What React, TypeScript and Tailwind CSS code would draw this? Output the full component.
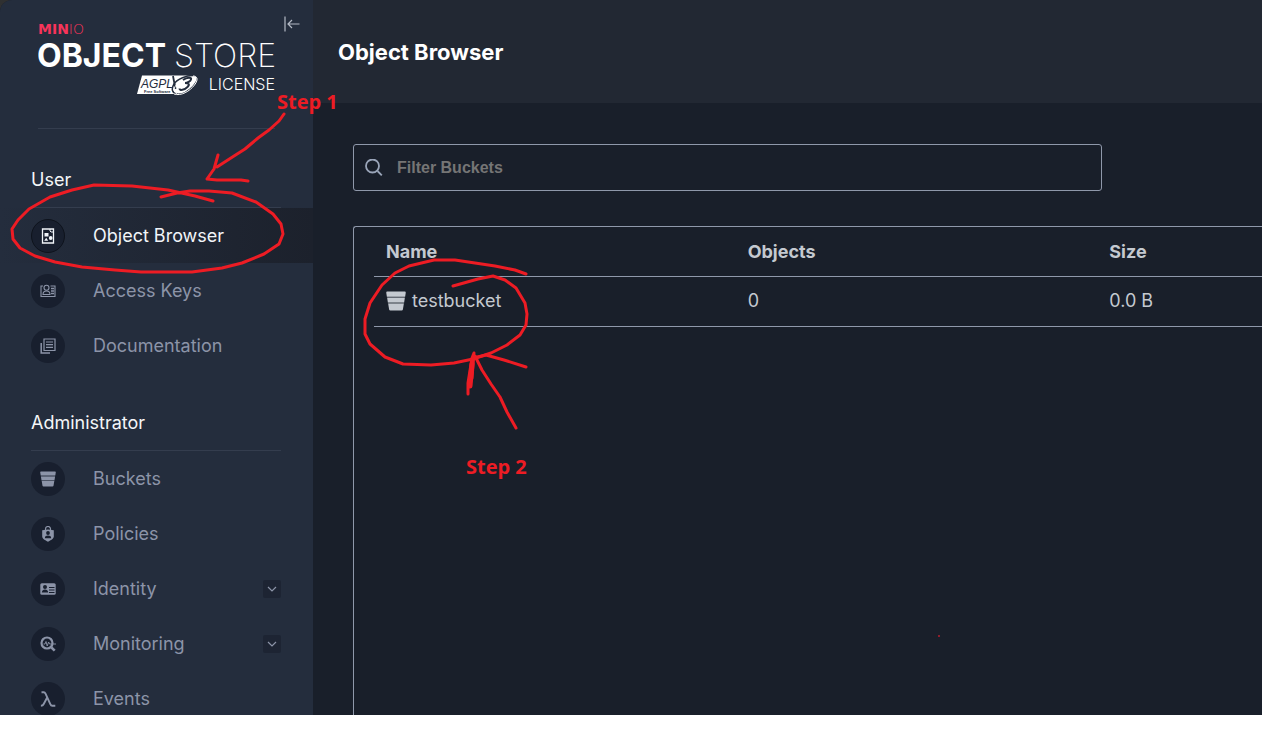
import type { ReactNode } from "react";

type NavItem = { label: string; icon: ReactNode; active?: boolean; expandable?: boolean };

function BucketIcon({ className }: { className: string }) {
  return (
    <svg viewBox="0 0 16 16" className={className} fill="currentColor" aria-hidden="true">
      <path d="M1 .4h14a.8.8 0 0 1 .8.9L15.3 4.600H.7L.2 1.300A.8.8 0 0 1 1 .4Z" />
      <path d="M.9 5.400h14.200l-.6 3.800H1.500Z" />
      <path d="M1.700 10h12.600l-.8 4.800a1 1 0 0 1-1 .8h-9a1 1 0 0 1-1-.8Z" />
      <path d="M1 4.600h14v.8H1ZM1.500 9.200h13v.8h-13Z" opacity=".35" />
    </svg>
  );
}

function ObjectBrowserIcon() {
  return (
    <svg viewBox="0 0 16 16" className="size-4" fill="none" stroke="currentColor" aria-hidden="true">
      <path d="M2.500 1h11v14h-11Z" strokeWidth="1.300" />
      <path d="M10 1v2l1 1h2.500" />
      <path d="M4.500 5h4v3.500h-4ZM4.200 12.800 6.200 9.800l2 3Z" fill="currentColor" stroke="none" />
      <circle cx="10.700" cy="10" r="1.900" fill="currentColor" stroke="none" />
    </svg>
  );
}

function AccessKeysIcon() {
  return (
    <svg viewBox="0 0 16 14" className="h-3.5 w-4" fill="none" stroke="currentColor" aria-hidden="true">
      <path d="M3 2H1v10.500h14V2h-4.500" strokeWidth="1.100" />
      <circle cx="6.500" cy="3.800" r="2.500" strokeWidth="1.100" />
      <path d="M3 10.500c0-2.300 1.500-3.500 3.500-3.500s3.500 1.200 3.500 3.500Z" strokeWidth="1.100" />
      <path d="M11 4.500h3M11 7h3M11 9.500h3" strokeWidth="1.500" />
    </svg>
  );
}

function DocumentationIcon() {
  return (
    <svg viewBox="0 0 16 16" className="size-4" fill="none" stroke="currentColor" aria-hidden="true">
      <path d="M4 1h11v11.500H4Z" strokeWidth="1.200" />
      <path d="M1.200 5v10H10" strokeWidth="1.500" />
      <path d="M6 4h7M6 6.700h7M6 9.400h7" strokeWidth="1.200" />
    </svg>
  );
}

function PoliciesIcon() {
  return (
    <svg viewBox="0 0 16 16" className="size-4" aria-hidden="true">
      <path d="M5.500 4.500V3a2.500 2.500 0 0 1 5 0v1.500" fill="none" stroke="currentColor" strokeWidth="1.200" />
      <path d="M2.200 4.200 8 3.500l5.800.7v6.300c0 2.300-3 3.700-5.800 5.300-2.800-1.600-5.800-3-5.800-5.300Z" fill="currentColor" />
      <circle cx="8" cy="7" r="1.900" className="fill-[#181f2e]" />
      <path d="M4.800 12.200c.1-2 1.200-2.700 3.200-2.700s3.100.7 3.200 2.700Z" className="fill-[#181f2e]" />
    </svg>
  );
}

function IdentityIcon() {
  return (
    <svg viewBox="0 0 16 12" className="h-3 w-4" aria-hidden="true">
      <rect x=".3" y=".3" width="15.400" height="11.400" rx="1.500" fill="currentColor" />
      <circle cx="5" cy="4" r="2" className="fill-[#181f2e]" />
      <path d="M1.800 9.500c.2-2 1.400-3 3.200-3s3 1 3.200 3Z" className="fill-[#181f2e]" />
      <path d="M9 4.500h5.500M9 7h5.500M9 9.500h5.500" className="stroke-[#181f2e]" />
    </svg>
  );
}

function MonitoringIcon() {
  return (
    <svg viewBox="0 0 16 16" className="size-4" fill="none" stroke="currentColor" aria-hidden="true">
      <circle cx="7" cy="7" r="5.500" strokeWidth="2.200" />
      <path d="m11.300 11.300 3.400 3.400" strokeWidth="2.600" />
      <path d="M3.500 8h1.500l1-2.500L7.200 10l1.400-4 1 2H16" strokeWidth=".9" />
    </svg>
  );
}

function EventsIcon() {
  return (
    <svg viewBox="0 0 16 16" className="size-4" fill="none" stroke="currentColor" aria-hidden="true">
      <path d="M1.500 1.300h2.300c1 0 1.300.5 1.700 1.300l4.800 10.600c.5 1.200 1 1.600 2 1.600h3" strokeWidth="1.900" />
      <path d="M7.200 6.500 3.700 13c-.6 1.200-1.200 1.700-2.800 1.700" strokeWidth="1.900" />
    </svg>
  );
}

const userItems: NavItem[] = [
  { label: "Object Browser", icon: <ObjectBrowserIcon />, active: true },
  { label: "Access Keys", icon: <AccessKeysIcon /> },
  { label: "Documentation", icon: <DocumentationIcon /> },
];

const adminItems: NavItem[] = [
  { label: "Buckets", icon: <BucketIcon className="size-4" /> },
  { label: "Policies", icon: <PoliciesIcon /> },
  { label: "Identity", icon: <IdentityIcon />, expandable: true },
  { label: "Monitoring", icon: <MonitoringIcon />, expandable: true },
  { label: "Events", icon: <EventsIcon /> },
];

function NavSection({ title, items }: { title: string; items: NavItem[] }) {
  return (
    <section className="pt-9">
      <h2 className="ml-[31px] mr-8 h-[42px] border-b border-[#343d4e] text-lg leading-7 text-[#f4f6f8]">{title}</h2>
      <ul>
        {items.map((item) => (
          <li
            key={item.label}
            className={
              item.active
                ? "flex h-[55px] items-center bg-linear-to-r from-[#242d3d] to-[#1c212c] pl-[31px] pr-8 text-[#f1f5f9]"
                : "flex h-[55px] items-center pl-[31px] pr-8 text-[#8c94a8]"
            }
          >
            <a href="#" className="flex flex-1 items-center gap-7">
              <span
                className={
                  item.active
                    ? "flex size-[34px] items-center justify-center rounded-full border border-[#0e131c] bg-[#181f2e]"
                    : "flex size-[34px] items-center justify-center rounded-full bg-[#181f2e]"
                }
              >
                {item.icon}
              </span>
              <span className="text-lg leading-6">{item.label}</span>
            </a>
            {item.expandable && (
              <button
                type="button"
                aria-label={`Expand ${item.label}`}
                className="flex size-[18px] items-center justify-center rounded-xs bg-[#1d2433]"
              >
                <svg viewBox="0 0 10 6" className="h-1.5 w-2.5" fill="none" stroke="currentColor" aria-hidden="true">
                  <path d="m1 1 4 4 4-4" strokeWidth="1.200" />
                </svg>
              </button>
            )}
          </li>
        ))}
      </ul>
    </section>
  );
}

function Logo() {
  return (
    <svg viewBox="0 0 240 76" className="h-[76px] w-[240px]" role="img" aria-label="MinIO Object Store, AGPL v3 license">
      <text x="0" y="14" fontSize="14" fontWeight="700" fontFamily="'DejaVu Sans', sans-serif" fill="#f7345a">
        MIN<tspan fontWeight="200">IO</tspan>
      </text>
      <g fill="#ffffff" fontFamily="Inter, sans-serif">
        <text x="-1" y="47" fontSize="32" fontWeight="700">OBJECT</text>
        <text x="238" y="47" fontSize="32" fontWeight="200" textAnchor="end">STORE</text>
        <text x="237" y="70" fontSize="16" fontWeight="300" textAnchor="end">LICENSE</text>
      </g>
      <path d="M104 55.500h48l-11 18.500H99Z" fill="#ffffff" />
      <path d="M139 74c-5-1-6-5-3-10s13-9 20-8.500c5 .5 4 6-1 11s-11 8.500-16 7.500Z" fill="#ffffff" stroke="#242d3d" strokeWidth="1.500" />
      <path d="M135 56l2.500 13" stroke="#242d3d" strokeWidth="1.800" />
      <path d="M139 73.500c-4-1-3.500-6 0-9.500m-3 10c7 2.500 16-3 20.500-9s2.500-9-1.500-9" fill="none" stroke="#ffffff" strokeWidth="1" />
      <path d="M145 60c4-3 9-3 8-.5-.6 2-4 3.500-6 3.500 4 0 5 1.500 2.500 4-3 3-8 4-8 1.500" fill="none" stroke="#242d3d" strokeWidth="2" />
      <text x="103" y="68" fontSize="12" fontStyle="italic" fontFamily="'Liberation Sans', sans-serif" fill="#242d3d">AGPL</text>
      <text x="106" y="73" fontSize="4" fontWeight="700" fontFamily="'Liberation Sans', sans-serif" fill="#242d3d">Free Software</text>
    </svg>
  );
}

function Annotations() {
  return (
    <div className="pointer-events-none absolute left-0 top-0">
      <svg
        width="960"
        height="680"
        viewBox="0 0 960 680"
        fill="none"
        stroke="#ed1c24"
        strokeWidth="3"
        strokeLinecap="round"
        strokeLinejoin="round"
        aria-label="Step 1, Step 2"
      >
        <path d="M284 114 279 121 269 130 258 138 245 149 234 156 217 167M218 155 214 169 207 179 217 180 241 180 248 181" />
        <path d="M213 201 195 196 168 190 132 186 94 185 72 190 50 197 29 209 18 220 12 229 13 239 20 248 35 256 55 262 82 267 115 270 141 272 192 272 222 268 242 263 264 254 279 244 283 234 281 224 273 214 256 202 232 193 209 191 190 191 177 193 161 197" />
        <path d="M526 274 515 270 495 266 455 260 434 260 409 266 395 273 382 285 370 303 365 319 365 334 370 344 385 357 403 364 431 365 454 363 473 359 491 353 507 345 520 335 526 325 527 314 525 303 516 288 505 280 493 276 478 279 453 286" />
        <path d="M468 394 468 383 472 358 474 353 472 378 468 388M475 356 482 370 491 384 500 397 507 412 516 428M473 358 486 355 504 360 526 367" />
        <path d="m470 386 2-22" strokeWidth="5" />
        <g fill="#ed1c24" stroke="none" fontFamily="'Open Sans', sans-serif" fontSize="20" fontWeight="700">
          <text x="277" y="109">Step 1</text>
          <text x="466" y="474">Step 2</text>
        </g>
        <circle cx="939" cy="636" r="1" fill="#b51f2c" stroke="none" />
      </svg>
    </div>
  );
}

export default function App() {
  return (
    <div className="relative h-screen overflow-hidden bg-white pb-3.5 font-[Inter,sans-serif]">
      <div className="h-full bg-[#2f3031]">
        <div className="flex h-full overflow-hidden rounded-tl-xl bg-[#191f2a]">
          <aside className="w-[313px] shrink-0 overflow-hidden bg-[#242d3d]">
            <div className="relative mx-[38px] h-[129px] border-b border-[#343d4e] pt-5">
              <Logo />
              <button type="button" aria-label="Collapse menu" className="absolute -right-[25px] top-4 text-[#b4bac5]">
                <svg viewBox="0 0 16 16" className="size-4" fill="none" stroke="currentColor" strokeWidth="1.200" aria-hidden="true">
                  <path d="M1 .5v15M15.500 8H4M8 4 4 8l4 4" />
                </svg>
              </button>
            </div>
            <nav aria-label="Main" className="pt-px">
              <NavSection title="User" items={userItems} />
              <NavSection title="Administrator" items={adminItems} />
            </nav>
          </aside>

          <main className="flex min-w-0 flex-1 flex-col overflow-hidden">
            <header className="flex h-[103px] shrink-0 items-center bg-[#222833] pl-[25px]">
              <h1 className="text-[22px] font-bold leading-8 text-white">Object Browser</h1>
            </header>
            <div className="flex flex-1 flex-col gap-[35px] pl-10 pt-[41px]">
              <label className="flex h-[47px] w-full max-w-[749px] shrink-0 items-center gap-[14px] rounded-[3px] border border-[#8f98aa] pl-[11px]">
                <svg viewBox="0 0 18 18" className="size-[18px]" fill="none" stroke="#9aa5b9" strokeWidth="1.800" aria-hidden="true">
                  <circle cx="7.500" cy="7" r="6.500" />
                  <path d="m12.500 12 4.300 4.300" />
                </svg>
                <input
                  type="text"
                  aria-label="Filter Buckets"
                  placeholder="Filter Buckets"
                  className="h-full min-w-0 flex-1 bg-transparent font-['Liberation_Sans',sans-serif] text-base font-bold text-[#c4c9d0] outline-none placeholder:text-[#757575]"
                />
              </label>
              <div className="min-w-[1106px] flex-1 rounded-tl-[3px] border-l border-t border-[#8f98aa] pl-5">
                <table className="w-[1085px] table-fixed border-collapse text-left text-lg leading-6 text-[#c4c9d0]">
                  <thead>
                    <tr className="h-[49px] border-b border-[#8f98aa]">
                      <th className="pl-3 pt-0.5 font-bold">Name</th>
                      <th className="pl-3 pt-0.5 font-bold">Objects</th>
                      <th className="pl-3 pt-0.5 font-bold">Size</th>
                    </tr>
                  </thead>
                  <tbody>
                    <tr className="h-[50px] border-b border-[#8f98aa]">
                      <td className="pl-3">
                        <a href="#" className="flex items-center gap-1.5">
                          <BucketIcon className="size-5" />
                          testbucket
                        </a>
                      </td>
                      <td className="pl-3">0</td>
                      <td className="pl-3">0.0 B</td>
                    </tr>
                  </tbody>
                </table>
              </div>
            </div>
          </main>
        </div>
      </div>
      <Annotations />
    </div>
  );
}
